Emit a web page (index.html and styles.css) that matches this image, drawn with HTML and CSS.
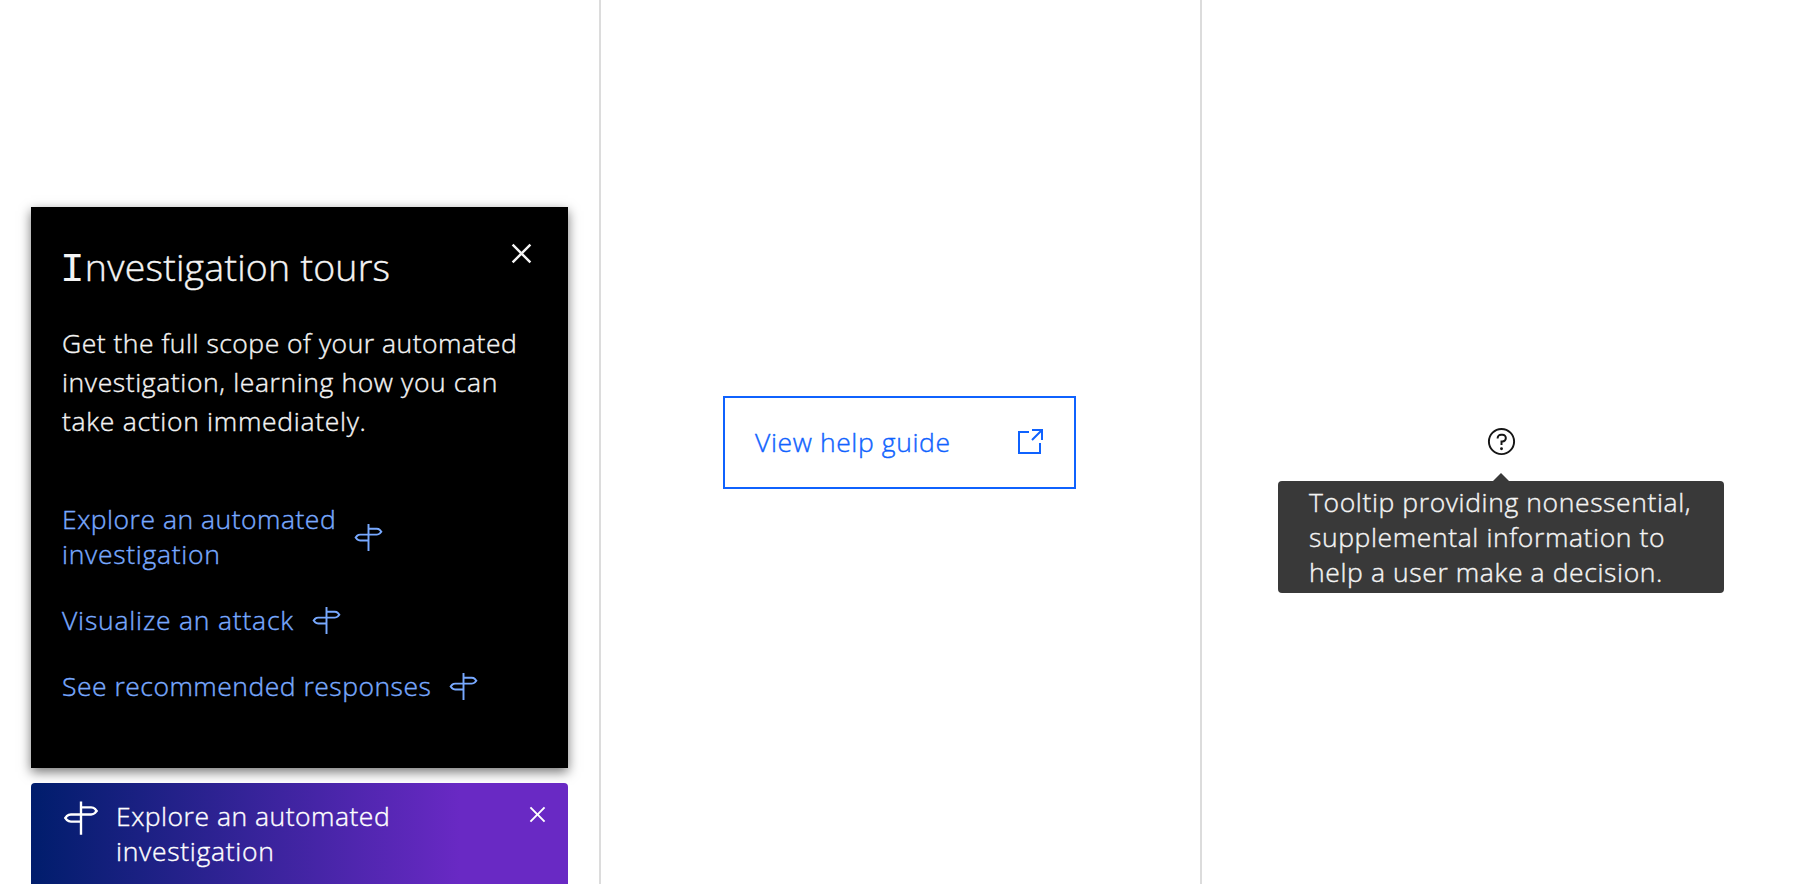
FILE: index.html
```html
<!DOCTYPE html>
<html lang="en">
<head>
<meta charset="utf-8">
<title>Guidance patterns</title>
<link rel="stylesheet" href="styles.css">
</head>
<body>
<svg class="sprite" aria-hidden="true">
  <symbol id="signpost" viewBox="0 0 32 32">
    <path d="M16 2v28M16 7h8.500q2 0 3.200 1.200l1.500 1.800-1.500 1.800q-1.200 1.200-3.200 1.200H7.500q-2 0-3.200 1.200l-1.500 1.800 1.500 1.800q1.200 1.200 3.200 1.200H16" fill="none" stroke="currentColor" stroke-width="2"/>
  </symbol>
  <symbol id="close" viewBox="0 0 32 32">
    <path d="M17.414 16 24 9.414 22.586 8 16 14.586 9.414 8 8 9.414 14.586 16 8 22.586 9.414 24 16 17.414 22.586 24 24 22.586z" fill="currentColor"/>
  </symbol>
</svg>
<main class="board">
  <section class="column column--start">
    <article class="panel">
      <header class="panel-head">
        <h1 class="panel-title"><span class="slab">I</span>nvestigation tours</h1>
        <svg class="panel-close"><use href="#close"/></svg>
      </header>
      <p class="panel-text"><span class="snug">Get the full scope of your automated</span><br>investigation, learning how you can<br><span class="loose">take action immediately.</span></p>
      <nav class="links">
        <a class="link"><span><span class="snug">Explore an automated</span><br><span class="loose">investigation</span></span><svg class="link-icon"><use href="#signpost"/></svg></a>
        <a class="link"><span class="looser">Visualize an attack</span><svg class="link-icon"><use href="#signpost"/></svg></a>
        <a class="link"><span class="snug">See recommended responses</span><svg class="link-icon"><use href="#signpost"/></svg></a>
      </nav>
    </article>
    <aside class="banner">
      <svg class="banner-icon"><use href="#signpost"/></svg>
      <p class="banner-text"><span class="snug">Explore an automated</span><br><span class="loose">investigation</span></p>
      <svg class="banner-close"><use href="#close"/></svg>
    </aside>
  </section>
  <section class="column column--center">
    <a class="button"><span>View help guide</span>
      <svg class="button-icon" viewBox="0 0 32 32"><path d="M15 6H5v21h21V17M18 4h10v10M27.500 4.500 18 14" fill="none" stroke="currentColor" stroke-width="2"/></svg>
    </a>
  </section>
  <section class="column column--center">
    <div class="help">
      <svg class="help-icon" viewBox="0 0 32 32"><circle cx="16" cy="16" r="13" fill="none" stroke="currentColor" stroke-width="2"/><circle cx="16" cy="23.500" r="1.500" fill="currentColor"/><path d="M17 8h-1.500A4.490 4.490 0 0 0 11 12.500v.5h2v-.5a2.500 2.500 0 0 1 2.500-2.500H17a2.500 2.500 0 0 1 0 5h-2v4.500h2V17a4.500 4.500 0 0 0 0-9z" fill="currentColor"/></svg>
      <div class="tooltip"><p class="tooltip-text">Tooltip providing nonessential,<br>supplemental information to<br>help a user make a decision.</p></div>
    </div>
  </section>
</main>
</body>
</html>
```
FILE: styles.css
```css
* { box-sizing: border-box; margin: 0; padding: 0; }
body {
  height: 884px;
  overflow: hidden;
  background: #fff;
  color: #161616;
  font-family: "Open Sans", "Noto Sans", sans-serif;
  font-size: 26.500px;
  font-weight: 300;
  line-height: 35px;
  letter-spacing: .61px;
  -webkit-text-stroke: .4px currentColor;
}
svg { display: block; flex: none; }
.sprite { position: absolute; width: 0; height: 0; }
.snug { letter-spacing: .5px; }
.loose { letter-spacing: .7px; }
.looser { letter-spacing: .8px; }
.board { display: grid; grid-template-columns: 601px 601px 598px; height: 884px; }
.column { border-right: 2px solid #dcdcdc; }
.column:last-child { border-right: 0; }
.column--start { padding: 207px 31px 0; }
.column--center { display: flex; justify-content: center; }

.panel {
  height: 561px;
  padding: 31px 31px 0;
  background: #000;
  color: #f4f4f4;
  box-shadow: 0 4px 11px rgba(0, 0, 0, .55);
}
.panel-head { display: flex; justify-content: space-between; height: 86px; }
.panel-title { font-size: 37.500px; font-weight: 300; line-height: 58px; letter-spacing: .22px; }
.slab { margin-left: -2px; font-family: "Liberation Mono", monospace; font-size: 41px; line-height: 1; -webkit-text-stroke: 0; }
.panel-close { width: 39px; height: 39px; margin-right: -4px; margin-top: -4px; }
.panel-text { line-height: 38.800px; }
.links { display: flex; flex-direction: column; gap: 31px; margin-top: 62px; color: #78a9ff; }
.link { display: flex; align-items: center; gap: 17px; }
.link-icon { width: 31px; height: 31px; }

.banner {
  display: flex;
  height: 104px;
  margin-top: 15px;
  padding: 16px 15px 0 31px;
  border-radius: 4px 4px 0 0;
  background: linear-gradient(90deg, #001d6c 0%, #6929c4 80%);
  color: #fff;
}
.banner-icon { width: 38px; height: 38px; }
.banner-text { flex: 1; margin-left: 16px; }
.banner-close { width: 31px; height: 31px; }

.button {
  display: flex;
  align-items: center;
  justify-content: space-between;
  width: 353px;
  height: 93px;
  margin: 396px 2px 0 0;
  padding: 0 28px 0 30px;
  border: 2px solid #0f62fe;
  color: #0f62fe;
}
.button-icon { width: 32px; height: 32px; margin-bottom: 2px; }

.help { display: flex; flex-direction: column; align-items: center; padding-top: 426px; }
.help-icon { width: 31px; height: 31px; }
.tooltip { position: relative; width: 446px; height: 112px; margin-top: 24px; padding: 4px 31px; border-radius: 4px; background: #393939; color: #f4f4f4; }
.tooltip::before { content: ""; position: absolute; left: 215px; top: -8px; border: 8px solid transparent; border-top: 0; border-bottom-color: #393939; }
```
